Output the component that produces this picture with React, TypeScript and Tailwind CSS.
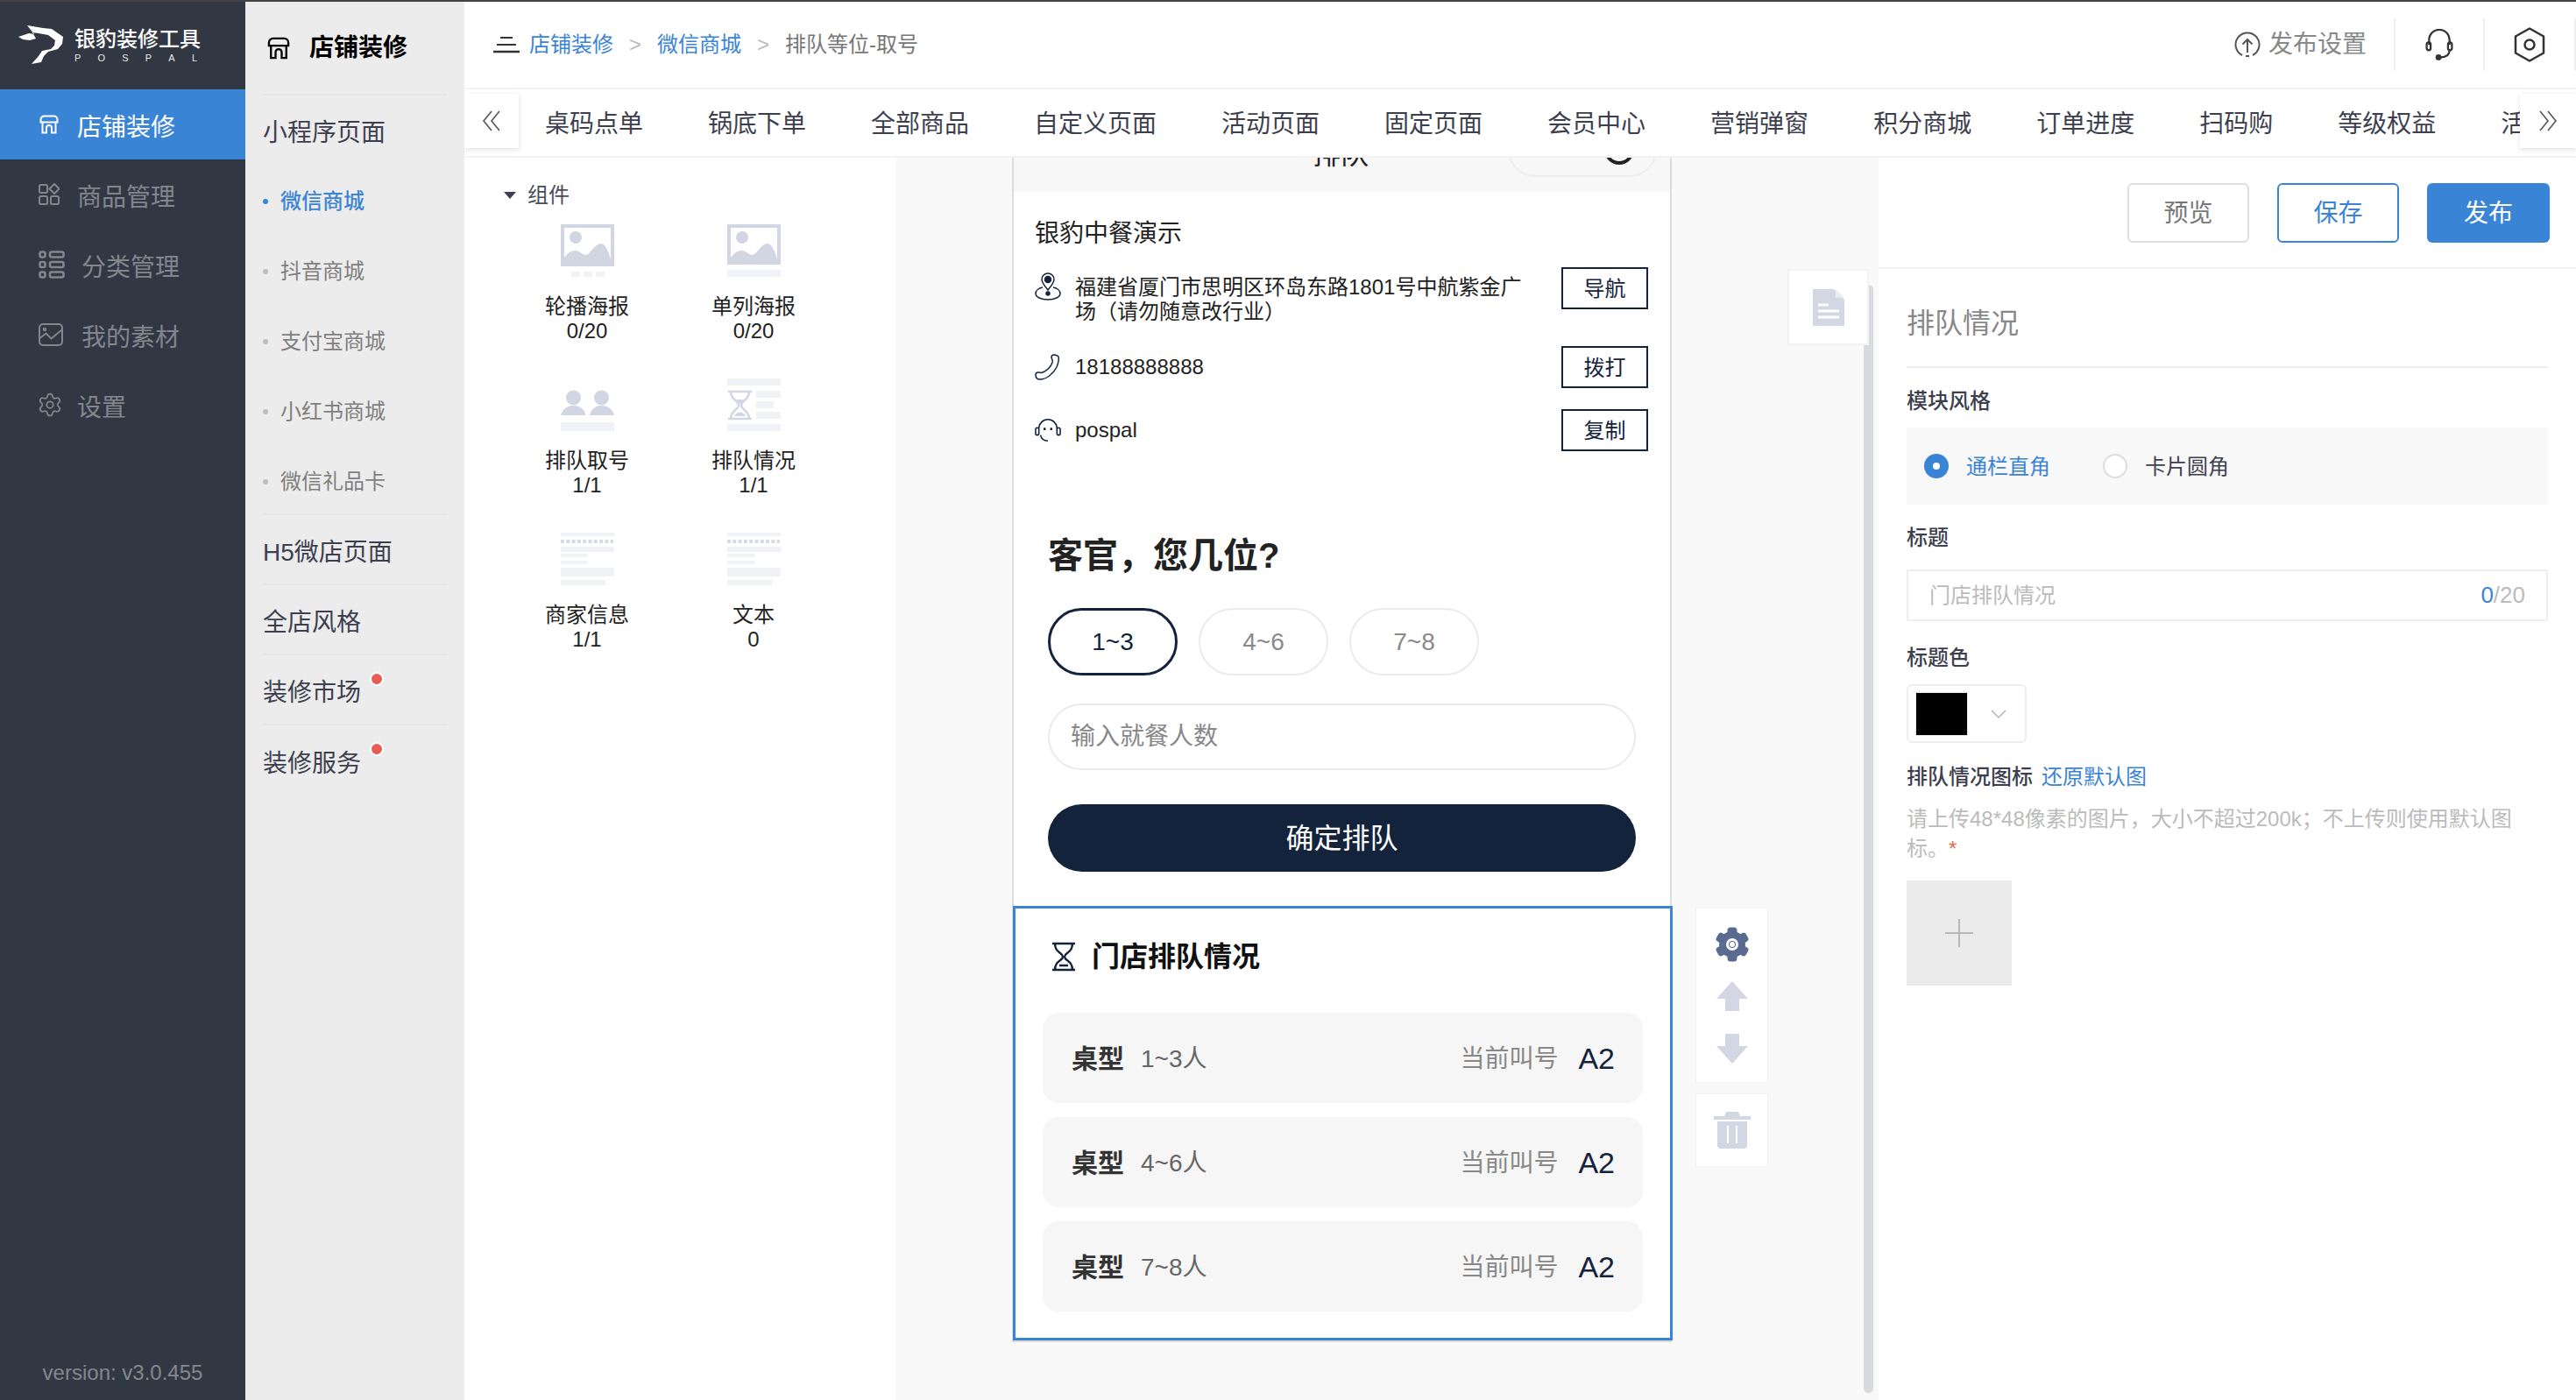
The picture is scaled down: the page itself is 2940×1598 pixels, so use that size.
import { Settings } from "lucide-react";

const navItems = [
  { label: "商品管理", icon: "goods", gap: "gap-[20px]" },
  { label: "分类管理", icon: "category", gap: "gap-[19px]" },
  { label: "我的素材", icon: "material", gap: "gap-[21px]" },
  { label: "设置", icon: "settings", gap: "gap-[16px]" },
];

const shopLinks = ["抖音商城", "支付宝商城", "小红书商城", "微信礼品卡"];

const tabs = ["桌码点单", "锅底下单", "全部商品", "自定义页面", "活动页面", "固定页面", "会员中心", "营销弹窗", "积分商城", "订单进度", "扫码购", "等级权益", "活动专区"];

const widgets = [
  { label: "轮播海报", count: "0/20", icon: "carousel" },
  { label: "单列海报", count: "0/20", icon: "poster" },
  { label: "排队取号", count: "1/1", icon: "people" },
  { label: "排队情况", count: "1/1", icon: "queue" },
  { label: "商家信息", count: "1/1", icon: "text" },
  { label: "文本", count: "0", icon: "text" },
];

const queueRows = ["1~3人", "4~6人", "7~8人"];

function StoreIcon({ className }: { className: string }) {
  return (
    <svg viewBox="0 0 24 24" fill="none" stroke="currentColor" strokeWidth="2" className={className}>
      <path d="M6.5 2.5h11a4 4 0 0 1 4 4v3h-19v-3a4 4 0 0 1 4-4z" />
      <path d="M4.5 9.5v12h4.500v-5.500a3 3 0 0 1 6 0v5.500h4.500v-12" />
    </svg>
  );
}

function NavIcon({ name }: { name: string }) {
  if (name === "goods") {
    return (
      <svg viewBox="0 0 24 26" fill="none" stroke="currentColor" strokeWidth="2" className="w-[24px] h-[26px]">
        <rect x="1" y="2" width="9" height="9" rx="1.5" />
        <path d="M18 1l5.5 5.5L18 12l-5.5-5.5z" />
        <rect x="1" y="15" width="9" height="9" rx="1.5" />
        <rect x="14" y="15" width="9" height="9" rx="1.5" />
      </svg>
    );
  }
  if (name === "category") {
    return (
      <svg viewBox="0 0 30 32" fill="none" stroke="currentColor" strokeWidth="2.6" className="w-[30px] h-[32px]">
        <rect x="1.5" y="1.5" width="6" height="6" rx="2" />
        <rect x="1.5" y="13" width="6" height="6" rx="2" />
        <rect x="1.5" y="24.5" width="6" height="6" rx="2" />
        <rect x="13" y="1.5" width="15.5" height="6" rx="2" />
        <rect x="13" y="13" width="15.5" height="6" rx="2" />
        <rect x="13" y="24.5" width="15.5" height="6" rx="2" />
      </svg>
    );
  }
  if (name === "material") {
    return (
      <svg viewBox="0 0 28 26" fill="none" stroke="currentColor" strokeWidth="2" className="w-[28px] h-[26px]">
        <rect x="1" y="1" width="26" height="24" rx="4" />
        <path d="M1.5 17l7-5.5 6 6 12-10" />
        <circle cx="7" cy="7" r="1.2" />
      </svg>
    );
  }
  return <Settings className="w-[30px] h-[30px] -ml-[2px]" strokeWidth={1.4} />;
}

function PosterIcon({ name }: { name: string }) {
  const fill = "#d2d6e3";
  const pale = "#f1f2f6";
  if (name === "carousel" || name === "poster") {
    return (
      <svg width="61" height="60" viewBox="0 0 61 60">
        <rect x="0" y="0" width="61" height={name === "poster" ? 46 : 48} fill={fill} />
        <rect x="4" y="4" width="53" height={name === "poster" ? 38 : 40} fill="#fff" />
        <circle cx="17" cy="15" r="7" fill={fill} />
        <path d="M4 38c6-8 12-10 18-6s8 4 12-1 8-9 12-9 9 9 11 18v4H4z" fill={fill} />
        {name === "carousel" ? (
          <g fill={pale}>
            <rect x="12" y="54" width="10" height="6" />
            <rect x="26" y="54" width="10" height="6" />
            <rect x="40" y="54" width="10" height="6" />
          </g>
        ) : (
          <rect x="0" y="52" width="61" height="8" fill={pale} />
        )}
      </svg>
    );
  }
  if (name === "people") {
    return (
      <svg width="61" height="60" viewBox="0 0 61 60">
        <g fill={fill}>
          <circle cx="14.5" cy="22" r="8.5" />
          <path d="M0 42c2-7 7-11 14.5-11S27 35 28.500 42z" />
          <circle cx="46.500" cy="22" r="8.500" />
          <path d="M33 42c2-7 6-11 13.500-11S59 35 61 42z" />
        </g>
        <rect x="0" y="50" width="61" height="10" fill={pale} />
      </svg>
    );
  }
  if (name === "queue") {
    return (
      <svg width="61" height="60" viewBox="0 0 61 60">
        <g fill={pale}>
          <rect x="0" y="0" width="61" height="8" />
          <rect x="33" y="14" width="28" height="8" />
          <rect x="33" y="26" width="20" height="8" />
          <rect x="33" y="38" width="28" height="8" />
          <rect x="0" y="52" width="61" height="8" />
        </g>
        <path d="M1 15h27M1 46h27M4 15c0 10 9 10 9 15.500S4 36 4 46M25 15c0 10-9 10-9 15.500S25 36 25 46" fill="none" stroke={fill} strokeWidth="2.500" />
        <path d="M8 43c3-6 10-6 13 0zM10 24h9l-4.500 5z" fill={fill} />
      </svg>
    );
  }
  return (
    <svg width="61" height="60" viewBox="0 0 61 60">
      <g fill={pale}>
        <rect x="0" y="0" width="61" height="4" />
        <rect x="0" y="16" width="61" height="6" />
        <rect x="0" y="24" width="31" height="4" />
        <rect x="0" y="32" width="31" height="4" />
        <rect x="0" y="40" width="61" height="10" />
        <rect x="0" y="54" width="51" height="6" />
      </g>
      <path d="M0 10h60" stroke="#d8dbe6" strokeWidth="4" strokeDasharray="4 2.300" />
    </svg>
  );
}

function InfoButton({ label }: { label: string }) {
  return (
    <button className="w-[99px] h-[48px] shrink-0 border-2 border-[#14233c] text-[24px] text-[#14233c] flex items-center justify-center pt-[2px]">
      {label}
    </button>
  );
}

function GearBlob() {
  return (
    <svg width="42" height="42" viewBox="0 0 42 42">
      <g fill="#5a6b92">
        <circle cx="21" cy="21" r="15" />
        {[0, 60, 120, 180, 240, 300].map((deg) => (
          <rect key={deg} x="15.500" y="1.500" width="11" height="10" rx="3.500" transform={`rotate(${deg} 21 21)`} />
        ))}
      </g>
      <circle cx="21" cy="21" r="7" fill="#fff" />
      <circle cx="21" cy="21" r="4" fill="#5a6b92" />
      <circle cx="21" cy="21" r="3" fill="#fff" />
    </svg>
  );
}

export default function App() {
  return (
    <div className="w-[2940px] h-[1598px] overflow-hidden flex flex-col bg-white font-['Liberation_Sans','Noto_Sans_CJK_SC',sans-serif]">
      <div className="h-[2px] shrink-0 bg-[#434343]" />
      <div className="flex flex-1 min-h-0">
        {/* Main nav */}
        <aside className="w-[280px] shrink-0 bg-[#313843] flex flex-col">
          <div className="h-[100px] shrink-0 flex items-center pl-[20px] pb-[2px] gap-[11px] text-white">
            <svg width="54" height="48" viewBox="0 0 54 48" fill="none">
              <path d="M1 15l12-4 6 1-8-10 18 3 10 1 13 9-1 8-5 6-11 3-5 5-3 7-11 2 8-9 4-6 10-2 4-4 1-6-8-6-11-2-7-1 4 7-7 2-8-1z" fill="#fff" />
              <path d="M28 12l9 3-4 2z" fill="#313843" />
            </svg>
            <div className="flex flex-col">
              <span className="text-[24px] leading-[30px] font-medium whitespace-nowrap">银豹装修工具</span>
              <span className="flex justify-between w-[140px] text-[11px] leading-[14px] -mt-[1px] text-[#e8e8e8]">
                {"POSPAL".split("").map((c, i) => (
                  <span key={i}>{c}</span>
                ))}
              </span>
            </div>
          </div>
          <div className="h-[80px] shrink-0 bg-[#3a84d6] flex items-center pl-[44px] gap-[20px] text-white text-[28px]">
            <StoreIcon className="w-[24px] h-[24px]" />
            <span className="pt-[8px]">店铺装修</span>
          </div>
          {navItems.map((item) => (
            <div key={item.label} className={`h-[80px] shrink-0 flex items-center pl-[44px] ${item.gap} text-[#83868d] text-[28px]`}>
              <NavIcon name={item.icon} />
              <span className="pt-[8px]">{item.label}</span>
            </div>
          ))}
          <div className="mt-auto pb-[17px] text-center text-[24px] leading-[28px] text-[#83888f]">version: v3.0.455</div>
        </aside>

        {/* Sub nav */}
        <aside className="w-[250px] shrink-0 bg-[#ececec] px-[20px] flex flex-col">
          <div className="h-[107px] shrink-0 border-b-2 border-[#e6e6e6] flex items-center gap-[21px] pl-[4px] text-[28px] font-bold text-black">
            <StoreIcon className="w-[28px] h-[28px]" />
            <span>店铺装修</span>
          </div>
          <div className="h-[81px] shrink-0 pt-[5px] flex items-center text-[28px] text-[#3d3f4f]">小程序页面</div>
          <div className="h-[398px] shrink-0 border-b-2 border-[#e6e6e6]">
            <div className="h-[80px] flex items-center gap-[14px] text-[24px] text-[#3a84d6] font-medium">
              <span className="w-[6px] h-[6px] rounded-full bg-[#3a84d6]" />
              <span>微信商城</span>
            </div>
            {shopLinks.map((s) => (
              <div key={s} className="h-[80px] flex items-center gap-[14px] text-[24px] text-[#7f7f7f]">
                <span className="w-[6px] h-[6px] rounded-full bg-[#bdbdbd]" />
                <span>{s}</span>
              </div>
            ))}
          </div>
          {["H5微店页面", "全店风格"].map((s) => (
            <div key={s} className="h-[80px] shrink-0 pt-[8px] border-b-2 border-[#e6e6e6] flex items-center text-[28px] text-[#3d3f4f]">
              {s}
            </div>
          ))}
          <div className="h-[80px] shrink-0 pt-[8px] border-b-2 border-[#e6e6e6] flex items-center text-[28px] text-[#3d3f4f] relative">
            装修市场
            <span className="absolute left-[122px] top-[19px] w-[16px] h-[16px] rounded-full bg-[#ea5b54] border-2 border-white" />
          </div>
          <div className="h-[80px] shrink-0 pt-[8px] flex items-center text-[28px] text-[#3d3f4f] relative">
            装修服务
            <span className="absolute left-[122px] top-[19px] w-[16px] h-[16px] rounded-full bg-[#ea5b54] border-2 border-white" />
          </div>
        </aside>

        <main className="flex-1 min-w-0 flex flex-col">
          {/* Header */}
          <header className="h-[100px] shrink-0 border-b-2 border-[#f2f2f2] flex items-center pl-[33px] text-[24px]">
            <svg width="30" height="22" viewBox="0 0 30 22" fill="none" className="mr-[11px]">
              <path d="M8 3h14M4 11h22" stroke="#333" strokeWidth="2" />
              <path d="M0 19h30" stroke="#333" strokeWidth="2.500" />
            </svg>
            <span className="text-[#3a84d6]">店铺装修</span>
            <span className="w-[50px] text-center text-[#bbb]">&gt;</span>
            <span className="text-[#3a84d6]">微信商城</span>
            <span className="w-[50px] text-center text-[#bbb]">&gt;</span>
            <span className="text-[#777]">排队等位-取号</span>
            <div className="ml-auto flex items-center h-[60px]">
              <svg width="30" height="30" viewBox="0 0 30 30" fill="none" stroke="#555" strokeWidth="2" className="mr-[9px]">
                <path d="M9 27a13.500 13.500 0 1 1 12 0" />
                <path d="M15 24V9M9.500 14.500L15 9l5.500 5.500" />
                <path d="M13 28h4" />
              </svg>
              <span className="text-[28px] text-[#888] mr-[31px]">发布设置</span>
              <div className="w-[104px] h-[60px] border-x-2 border-[#f0f0f0] flex items-center justify-center">
                <svg width="34" height="36" viewBox="0 0 36 40" fill="none" stroke="#333" strokeWidth="2.500">
                  <path d="M5 20v-6a13 13 0 0 1 26 0v6" />
                  <rect x="2" y="17" width="5" height="10" rx="2.500" />
                  <rect x="29" y="17" width="5" height="10" rx="2.500" />
                  <path d="M31 27c0 6-5 9-11 9" />
                  <circle cx="17" cy="36" r="2.500" fill="#333" />
                </svg>
              </div>
              <div className="w-[104px] h-[60px] border-r-2 border-[#f0f0f0] flex items-center justify-center">
                <svg width="36" height="40" viewBox="0 0 36 40" fill="none" stroke="#333" strokeWidth="2.500">
                  <path d="M18 1.500l16 9v19l-16 9-16-9v-19z" strokeLinejoin="round" />
                  <circle cx="18" cy="20" r="5.500" />
                </svg>
              </div>
            </div>
          </header>

          {/* Tabs */}
          <div className="h-[78px] shrink-0 border-b-2 border-[#f2f2f2] relative overflow-hidden">
            <div className="flex items-center h-full pl-[92px] pt-[3px] gap-[74px] whitespace-nowrap text-[28px] text-[#3d3f4f]">
              {tabs.map((t) => (
                <span key={t}>{t}</span>
              ))}
            </div>
            <button className="absolute left-0 top-[5px] w-[62px] h-[62px] bg-white shadow-[0_2px_6px_rgba(0,0,0,0.12)] flex items-center justify-center">
              <svg width="22" height="26" viewBox="0 0 22 26" fill="none" stroke="#555" strokeWidth="1.600">
                <path d="M11 2L2 13l9 11M20 2l-9 11 9 11" />
              </svg>
            </button>
            <button className="absolute right-0 top-[5px] w-[64px] h-[62px] bg-white shadow-[0_2px_6px_rgba(0,0,0,0.12)] flex items-center justify-center">
              <svg width="22" height="26" viewBox="0 0 22 26" fill="none" stroke="#555" strokeWidth="1.600">
                <path d="M2 2l9 11-9 11M11 2l9 11-9 11" />
              </svg>
            </button>
          </div>

          <div className="flex-1 min-h-0 flex">
            {/* Widgets */}
            <section className="w-[492px] shrink-0 bg-white pl-[45px]">
              <div className="h-[28px] mt-[29px] flex items-center gap-[13px] text-[24px] text-[#4a4c5a]">
                <span className="w-0 h-0 border-x-[7px] border-x-transparent border-t-[8px] border-t-[#3d3f4f]" />
                <span>组件</span>
              </div>
              <div className="grid grid-cols-[190px_190px] mt-[19px]">
                {widgets.map((w) => (
                  <div key={w.label} className="h-[176px] flex flex-col items-center text-[24px] leading-[28px] text-[#222]">
                    <PosterIcon name={w.icon} />
                    <span className="mt-[20px]">{w.label}</span>
                    <span>{w.count}</span>
                  </div>
                ))}
              </div>
            </section>

            {/* Canvas */}
            <section className="flex-1 min-w-0 bg-[#f9f9f9] pl-[133px] relative">
              <div className="w-[753px] border-x-2 border-b-2 border-[#dcdcdc] bg-white">
                <div className="h-[39px] bg-[#f7f7f7] relative overflow-hidden">
                  <div className="absolute left-[341px] -top-[24px] text-[32px] leading-[40px] text-[#222]">排队</div>
                  <div className="absolute left-[564px] -top-[40px] w-[170px] h-[62px] rounded-[31px] border-2 border-[#eeeeee] flex items-center justify-end pr-[24px]">
                    <span className="w-[34px] h-[34px] rounded-full border-[4px] border-[#222]" />
                  </div>
                </div>

                <div className="pl-[24px] pr-[25px]">
                  <div className="mt-[30px] text-[28px] leading-[36px] text-[#222]">银豹中餐演示</div>
                  <div className="mt-[20px] flex justify-between items-start">
                    <div className="flex gap-[16px]">
                      <svg width="30" height="32" viewBox="0 0 30 32" fill="none" stroke="#14233c" strokeWidth="1.500" className="shrink-0 mt-[6px]">
                        <path d="M15 20c-5-6-7-9-7-12a7 7 0 0 1 14 0c0 3-2 6-7 12z" />
                        <circle cx="15" cy="8" r="3.500" fill="#14233c" />
                        <path d="M9 17c-5 1-8 4-8 7 0 4 6 7 14 7s14-3 14-7c0-3-3-6-8-7" />
                        <circle cx="15" cy="24" r="2" fill="#14233c" />
                      </svg>
                      <div className="w-[514px] pt-[9px] text-[24px] leading-[28px] text-[#222]">福建省厦门市思明区环岛东路1801号中航紫金广场（请勿随意改行业）</div>
                    </div>
                    <InfoButton label="导航" />
                  </div>
                  <div className="mt-[25px] flex justify-between items-center">
                    <div className="flex items-center gap-[16px]">
                      <svg width="30" height="30" viewBox="0 0 30 30" fill="none" stroke="#14233c" strokeWidth="1.500" className="shrink-0">
                        <path d="M22 1c-2 0-3 1-3 3 1 3 2 4 1 6-2 5-6 9-11 11-2 1-3 0-5 0-2 0-3 1-3 3 0 3 2 5 5 5 7 0 15-6 19-14 2-5 3-9 2-12-1-1-3-2-5-2z" />
                      </svg>
                      <span className="text-[24px] leading-[28px] text-[#222]">18188888888</span>
                    </div>
                    <InfoButton label="拨打" />
                  </div>
                  <div className="mt-[24px] flex justify-between items-center">
                    <div className="flex items-center gap-[16px]">
                      <svg width="30" height="30" viewBox="0 0 32 30" fill="none" stroke="#14233c" strokeWidth="1.700" className="shrink-0">
                        <path d="M5 13a11 11 0 0 1 22 0" />
                        <rect x="1" y="12" width="4" height="9" rx="2" />
                        <rect x="27" y="12" width="4" height="9" rx="2" />
                        <path d="M7 21c1 5 4 7 9 7" />
                        <path d="M12 12v3M20 12v3" strokeWidth="2.500" />
                      </svg>
                      <span className="text-[24px] leading-[28px] text-[#222]">pospal</span>
                    </div>
                    <InfoButton label="复制" />
                  </div>
                </div>

                <div className="px-[39px]">
                  <div className="mt-[95px] text-[40px] leading-[48px] font-bold text-[#222]">客官，您几位?</div>
                  <div className="mt-[36px] flex gap-[24px]">
                    <button className="w-[148px] h-[77px] rounded-full border-[3px] border-[#14233c] text-[28px] text-[#14233c]">1~3</button>
                    <button className="w-[148px] h-[77px] rounded-full border-2 border-[#ebebeb] text-[28px] text-[#8a8a8a]">4~6</button>
                    <button className="w-[148px] h-[77px] rounded-full border-2 border-[#ebebeb] text-[28px] text-[#8a8a8a]">7~8</button>
                  </div>
                  <div className="mt-[32px] h-[76px] rounded-full border-2 border-[#ebebeb] flex items-center pl-[24px] text-[28px] text-[#888]">输入就餐人数</div>
                  <button className="mt-[39px] w-full h-[77px] rounded-full bg-[#14233c] text-white text-[32px]">确定排队</button>
                </div>

                <div className="mt-[39px] -ml-[1px] -mr-[3px] h-[496px] border-[3px] border-[#3a84d6] bg-white pl-[31px] pr-[31px] pt-[35px]">
                  <div className="flex items-center gap-[17px] pl-[9px] text-[32px] leading-[40px] font-bold text-[#111]">
                    <svg width="30" height="34" viewBox="0 0 30 34" fill="none" stroke="#14233c" strokeWidth="2.500">
                      <path d="M2 2h26M2 32h26M5 2c0 11 9 10 9 15S5 21 5 32M25 2c0 11-9 10-9 15s9 4 9 15" />
                      <path d="M10 27h10" />
                    </svg>
                    <span>门店排队情况</span>
                  </div>
                  <div className="mt-[44px] flex flex-col gap-[16px]">
                    {queueRows.map((r) => (
                      <div key={r} className="h-[103px] rounded-[18px] bg-[#f6f6f6] flex items-center pl-[33px] pr-[32px] pt-[2px]">
                        <span className="text-[30px] font-bold text-[#333]">桌型</span>
                        <span className="ml-[19px] text-[28px] text-[#666]">{r}</span>
                        <span className="ml-auto text-[28px] text-[#888]">当前叫号</span>
                        <span className="ml-[23px] text-[34px] text-[#14233c]">A2</span>
                      </div>
                    ))}
                  </div>
                </div>
              </div>

              {/* Floating tools */}
              <div className="absolute left-[913px] top-[856px] w-[83px] h-[200px] bg-white border border-[#f3f3f3] flex flex-col items-center pt-[20px]">
                <GearBlob />
                <svg width="40" height="36" viewBox="0 0 40 36" className="mt-[20px]" fill="#d3d7e3">
                  <path d="M20 1l18 20H28v14H12V21H2z" strokeLinejoin="round" />
                </svg>
                <svg width="40" height="36" viewBox="0 0 40 36" className="mt-[24px]" fill="#d3d7e3">
                  <path d="M12 1h16v14h10L20 35 2 15h10z" />
                </svg>
              </div>
              <div className="absolute left-[913px] top-[1068px] w-[83px] h-[84px] bg-white border border-[#f3f3f3] flex items-center justify-center">
                <svg width="42" height="42" viewBox="0 0 42 42" fill="#d3d7e3">
                  <path d="M14 0h14l2 5h12v4H0V5h12z" />
                  <path d="M4 11h34v27a4 4 0 0 1-4 4H8a4 4 0 0 1-4-4zM15 16v20h2V16zM25 16v20h2V16z" fillRule="evenodd" />
                </svg>
              </div>
              <div className="absolute left-[1105px] top-[145px] bottom-[8px] w-[11px] rounded-full bg-[#d8dade]" />
              <div className="absolute left-[1018px] top-[127px] w-[93px] h-[87px] bg-white border-2 border-[#f2f2f2] flex items-center justify-center">
                <svg width="36" height="42" viewBox="0 0 36 42">
                  <path d="M0 0h24l12 12v30H0z" fill="#d3d7e3" />
                  <path d="M26 0l10 10H26z" fill="#e9ebf1" />
                  <path d="M6 18h12M6 25h24M6 32h24" stroke="#fff" strokeWidth="3" />
                </svg>
              </div>
            </section>

            {/* Settings panel */}
            <section className="w-[796px] shrink-0 bg-white">
              <div className="h-[127px] border-b-2 border-[#f2f2f2] flex items-start justify-end gap-[32px] pt-[29px] pr-[30px]">
                <button className="w-[139px] h-[68px] rounded-[6px] border-2 border-[#dedede] text-[28px] text-[#777] pt-[2px]">预览</button>
                <button className="w-[139px] h-[68px] rounded-[6px] border-2 border-[#3a84d6] text-[28px] text-[#3a84d6] pt-[2px]">保存</button>
                <button className="w-[140px] h-[68px] rounded-[6px] bg-[#3a84d6] text-[28px] text-white pt-[2px]">发布</button>
              </div>
              <div className="px-[32px]">
                <div className="h-[113px] border-b-2 border-[#eeeeee] pt-[42px] text-[32px] leading-[40px] text-[#888]">排队情况</div>
                <div className="mt-[23px] text-[24px] leading-[30px] font-medium text-[#3d3f4f]">模块风格</div>
                <div className="mt-[15px] h-[88px] bg-[#f8f8f8] flex items-center pl-[20px] text-[24px]">
                  <span className="w-[28px] h-[28px] rounded-full bg-[#3a84d6] flex items-center justify-center">
                    <span className="w-[8px] h-[8px] rounded-full bg-white" />
                  </span>
                  <span className="ml-[20px] pt-[2px] text-[#3a84d6]">通栏直角</span>
                  <span className="ml-[60px] w-[28px] h-[28px] rounded-full bg-white border-2 border-[#dedede]" />
                  <span className="ml-[20px] pt-[2px] text-[#3d3f4f]">卡片圆角</span>
                </div>
                <div className="mt-[23px] text-[24px] leading-[30px] font-medium text-[#3d3f4f]">标题</div>
                <div className="mt-[21px] h-[59px] border-2 border-[#eeeeee] rounded-[2px] flex items-center justify-between pl-[24px] pr-[24px] text-[24px] text-[#bbbbbb]">
                  <span>门店排队情况</span>
                  <span className="text-[26px]">
                    <span className="text-[#3a84d6]">0</span>/20
                  </span>
                </div>
                <div className="mt-[27px] text-[24px] leading-[30px] font-medium text-[#3d3f4f]">标题色</div>
                <div className="mt-[15px] w-[137px] h-[67px] border-2 border-[#eeeeee] rounded-[6px] flex items-center pl-[8px]">
                  <span className="w-[60px] h-[50px] bg-black border border-[#e8e8e8]" />
                  <svg width="20" height="12" viewBox="0 0 20 12" fill="none" stroke="#b5b5b5" strokeWidth="1.500" className="ml-[25px]">
                    <path d="M2 2l8 8 8-8" />
                  </svg>
                </div>
                <div className="mt-[24px] flex items-center h-[30px] text-[24px] leading-[30px]">
                  <span className="font-medium text-[#3d3f4f]">排队情况图标</span>
                  <span className="ml-[10px] text-[#3a84d6]">还原默认图</span>
                </div>
                <div className="mt-[16px] text-[24px] leading-[34px] text-[#bbbbbb] pr-[4px]">
                  请上传48*48像素的图片，大小不超过200k；不上传则使用默认图标。
                  <span className="text-[#ee6a4f]">*</span>
                </div>
                <div className="mt-[19px] w-[120px] h-[120px] bg-[#ebebeb] flex items-center justify-center">
                  <svg width="32" height="32" viewBox="0 0 32 32" stroke="#b9b9b9" strokeWidth="2">
                    <path d="M16 0v32M0 16h32" />
                  </svg>
                </div>
              </div>
            </section>
          </div>
        </main>
      </div>
    </div>
  );
}
